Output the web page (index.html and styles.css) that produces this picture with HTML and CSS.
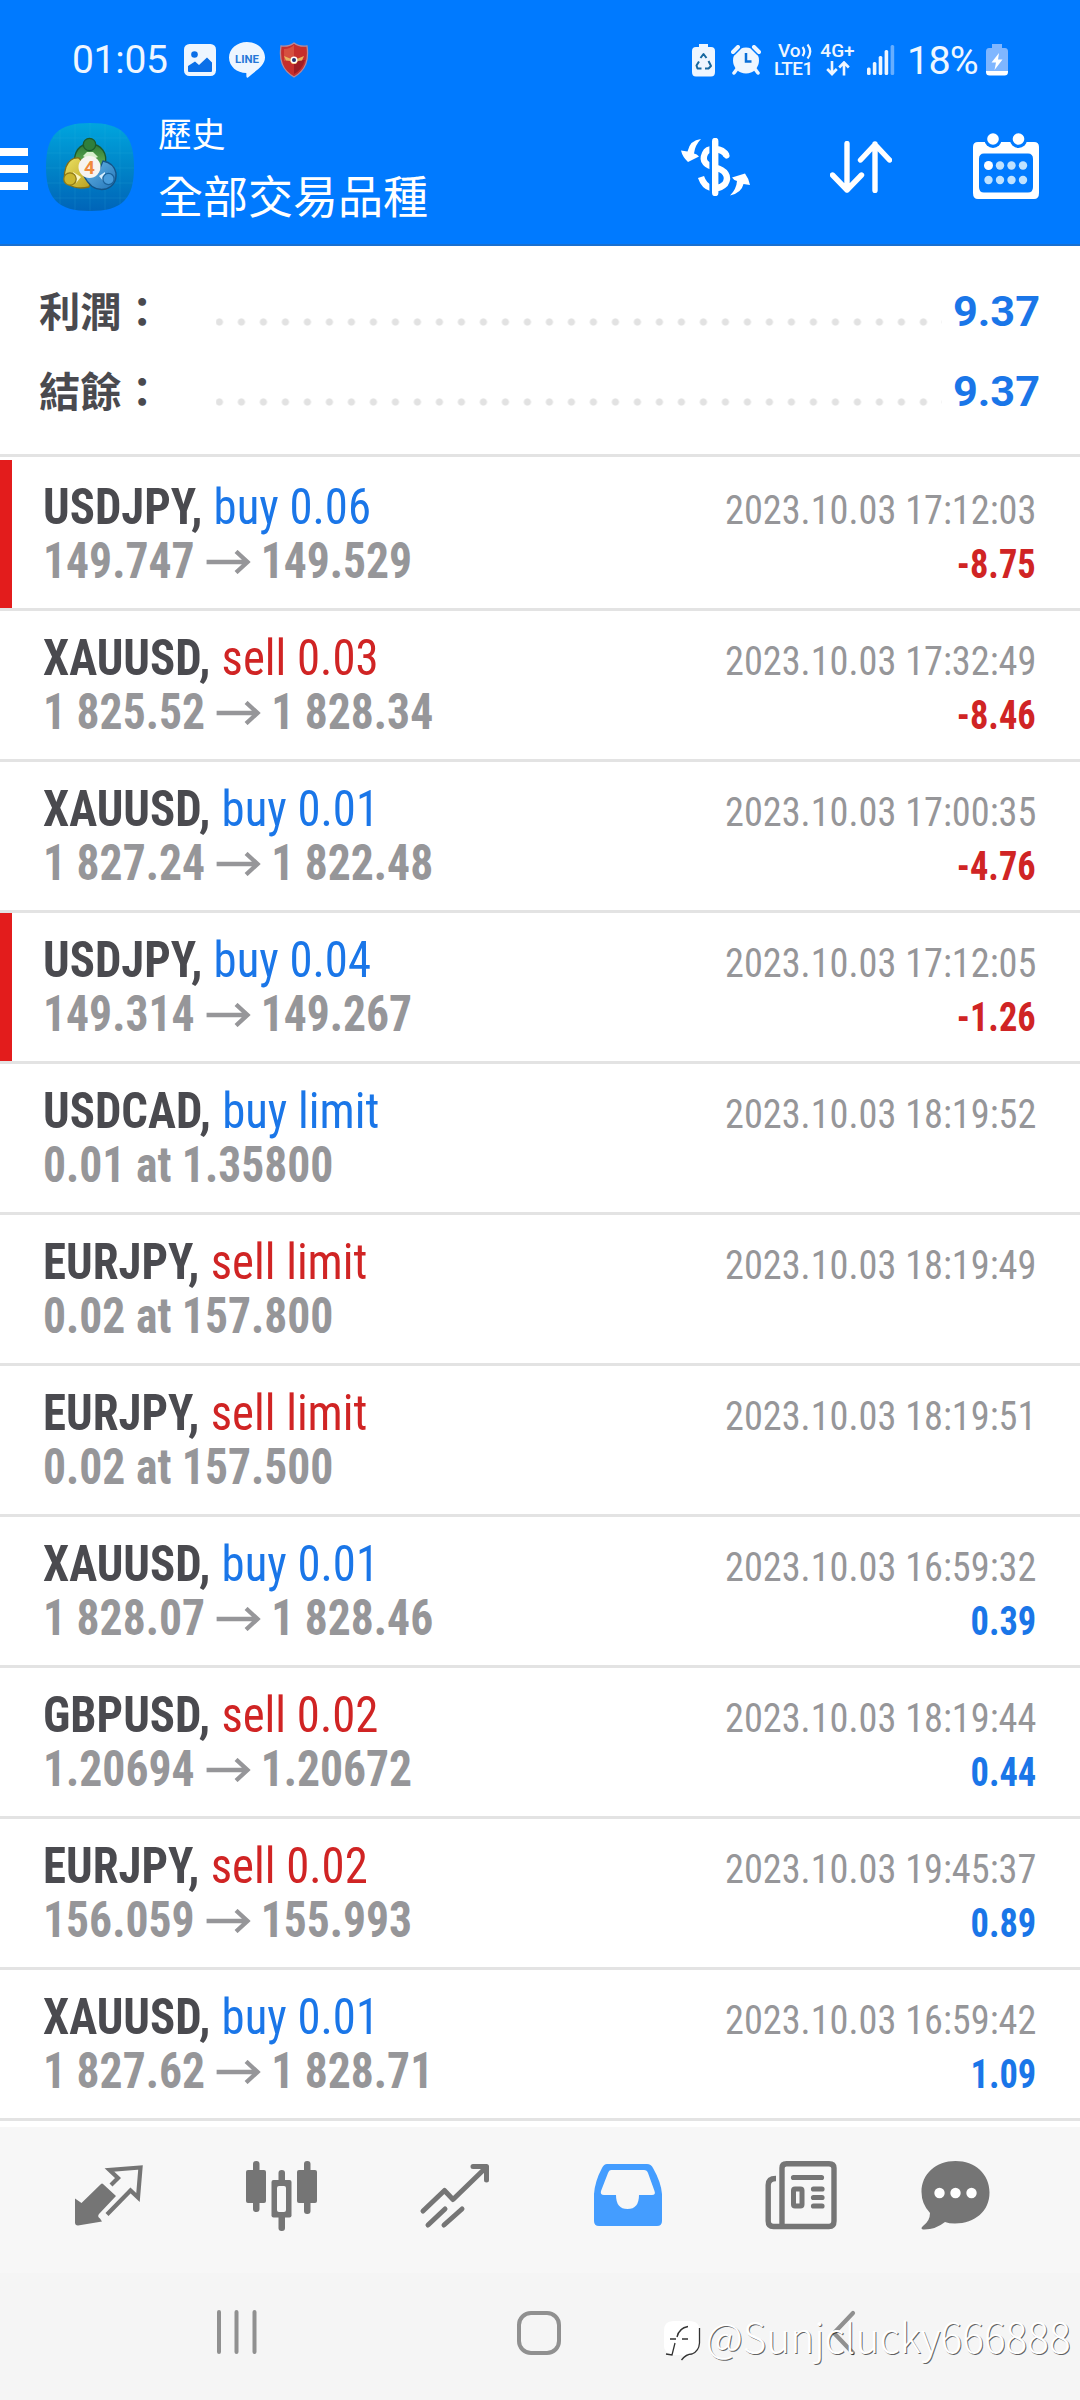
FILE: index.html
```html
<!DOCTYPE html>
<html lang="zh-Hant">
<head>
<meta charset="utf-8">
<title>歷史</title>
<link rel="stylesheet" href="styles.css">
</head>
<body>
<svg class="defs" width="0" height="0" aria-hidden="true">
  <symbol id="arrow" viewBox="0 0 45 24" preserveAspectRatio="none"><path d="M0 12H42M30 1.5L41.5 12L30 22.5" fill="none" stroke="currentColor" stroke-width="4.4"/></symbol>
</svg>
<header class="header">
  <div class="status">
    <span class="clock">01:05</span>
    <svg class="s-photo" width="32" height="32" viewBox="0 0 32 32"><rect width="32" height="32" rx="5.5" fill="#eef6ff"/><circle cx="10.5" cy="10.5" r="3.3" fill="#0a6fe8"/><path d="M4 22L11 17.5L15 21L23 13.500L28 18.500V27Q28 28 27 28H5Q4 28 4 27Z" fill="#0a6fe8"/></svg>
    <svg class="s-line" width="36" height="36" viewBox="0 0 36 36"><path d="M18 0C28 0 36 7 36 15.500C36 24 26 29 19 35.500C17 36.500 17.500 33 17.300 31C8 31 0 24.500 0 15.500C0 7 8 0 18 0Z" fill="#eef6ff"/><text x="6" y="20.500" textLength="24" lengthAdjust="spacingAndGlyphs" class="line-label">LINE</text></svg>
    <svg class="s-shield" width="30" height="36" viewBox="0 0 30 36"><path d="M2 4Q10 5 15 1Q20 5 28 4C30 18 27 28 15 35C3 28 0 18 2 4Z" fill="#c62f2d" stroke="#b58a9a" stroke-width="1.300"/><path d="M5 7Q11 7 15 3V16L5 19Z" fill="#d6503f"/><path d="M15 18H26Q23 28 15 32Z" fill="#9f1d25"/><path d="M5 14L11 16.500H19L25 14L23 18.500L19 19L17 22H13L11 19L7 18.500Z" fill="#e9b45f"/><circle cx="15" cy="18" r="3.400" fill="#fff"/><circle cx="15" cy="18" r="2" fill="#27306e"/></svg>
    <svg class="s-saver" width="23" height="33" viewBox="0 0 23 33"><path d="M7 0H16V3H19Q23 3 23 7V28Q23 32.500 19 32.500H4Q0 32.500 0 28V7Q0 3 4 3H7Z" fill="#eef6ff"/><path d="M8.500 14L11.500 10L14.500 14M16.500 17L19 22L16.500 24.500H13M9.500 24.500H5.500L4.500 21.500L7 17.500" fill="none" stroke="#17689f" stroke-width="2" stroke-linejoin="round"/></svg>
    <svg class="s-alarm" width="30" height="30" viewBox="0 0 30 30"><circle cx="15" cy="15.500" r="13" fill="#eef6ff"/><path d="M2 7L7 2M28 7L23 2" stroke="#007aff" stroke-width="7" stroke-linecap="round"/><path d="M2 7L7 2M28 7L23 2" stroke="#eef6ff" stroke-width="4" stroke-linecap="round"/><path d="M6 24L3 28M24 24L27 28" stroke="#eef6ff" stroke-width="3.500" stroke-linecap="round"/><path d="M15 8V16.500H20.500" fill="none" stroke="#0a6fd8" stroke-width="2.500"/></svg>
    <span class="net volte"><span>Vo<svg width="12" height="17" viewBox="0 0 12 17"><path d="M1.500 4Q5 8.500 1.500 13M6.500 1.500Q12 8.500 6.500 15.500" fill="none" stroke="#eef6ff" stroke-width="2.200"/></svg></span><span>LTE1</span></span>
    <span class="net gen"><span>4G+</span><svg width="24" height="15" viewBox="0 0 24 15"><path d="M6 0V12.500M1.200 8L6 13L10.800 8M18 14.500V2M13.200 6.500L18 1.500L22.800 6.500" fill="none" stroke="#eef6ff" stroke-width="2.600"/></svg></span>
    <svg class="s-signal" width="28" height="30" viewBox="0 0 28 30"><g fill="#eef6ff"><rect y="22.500" width="3.600" height="7.500" rx="1.500"/><rect x="5.800" y="17" width="3.600" height="13" rx="1.500"/><rect x="11.700" y="11" width="3.600" height="19" rx="1.500"/><rect x="17.600" y="5" width="3.600" height="25" rx="1.500"/></g><rect x="23.600" width="3.600" height="30" rx="1.500" fill="#66aeff"/></svg>
    <span class="percent">18%</span>
    <svg class="s-batt" width="22" height="32" viewBox="0 0 22 32"><path d="M6 0H16V4H19Q22 4 22 7.500V27H0V7.500Q0 4 3 4H6Z" fill="#7fb6ff"/><path d="M0 27H22V28Q22 31.500 18.500 31.500H3.500Q0 31.500 0 28Z" fill="#fff"/><path d="M13 9L5.500 18.500H10L8.500 26L16.500 15.500H12Z" fill="#fff"/></svg>
  </div>
  <div class="appbar">
    <svg class="menu" width="28" height="42" viewBox="0 0 28 42"><path d="M0 0H28V8H0ZM0 17H28V25H0ZM0 34H28V42H0Z" fill="#fff"/></svg>
    <svg class="logo" width="88" height="88" viewBox="0 0 88 88">
      <defs>
        <linearGradient id="bg" x1="0" y1="0" x2="0" y2="1"><stop offset="0" stop-color="#00a5de"/><stop offset=".5" stop-color="#0085c8"/><stop offset="1" stop-color="#0064b8"/></linearGradient>
        <linearGradient id="gr" x1="0" y1="0" x2="0" y2="1"><stop offset="0" stop-color="#2c7a35"/><stop offset="1" stop-color="#71b85a"/></linearGradient>
        <linearGradient id="ye" x1="0" y1="0" x2="1" y2="1"><stop offset="0" stop-color="#ece264"/><stop offset="1" stop-color="#b89d1c"/></linearGradient>
        <linearGradient id="bl" x1="0" y1="0" x2="1" y2="1"><stop offset="0" stop-color="#69b8e8"/><stop offset="1" stop-color="#2274b8"/></linearGradient>
      </defs>
      <path d="M44 0C76 0 88 12 88 44C88 76 76 88 44 88C12 88 0 76 0 44C0 12 12 0 44 0Z" fill="url(#bg)"/>
      <path d="M14 7V81M29 1V87M44 0V88M59 1V87M74 7V81M7 15H81M1 30H87M0 45H88M1 60H87M7 75H81" stroke="#3ab9e5" stroke-opacity=".15"/>
      <g stroke-width="1.300">
        <path d="M28 42C28 28 34 21 44 21C55 21 62 30 59 42L52 47H36Z" fill="url(#gr)" stroke="#1c5a2c"/>
        <path d="M33 35Q24 34 20 44Q16 56 22 61Q30 67 43 64L47 52Z" fill="url(#ye)" stroke="#826f16"/>
        <path d="M57 38Q68 40 70 50Q71 62 60 66Q46 69 38 53L52 50Z" fill="url(#bl)" stroke="#145487"/>
        <path d="M37 33L41 29H47L52 34L44 37Z" fill="#d7efcc"/>
        <path d="M27 49L35 54L30 60Z" fill="#fbf6c2"/>
        <path d="M53 53L59 49L59 60Z" fill="#d5eeff"/>
        <circle cx="43.500" cy="21.500" r="6.200" fill="#2f7f3c" stroke="#1c5a2c"/>
        <circle cx="24" cy="56" r="6.200" fill="#cdb72f" stroke="#8f7a18"/>
        <circle cx="62.500" cy="56" r="5.600" fill="#4a9ddb" stroke="#1b639c"/>
      </g>
      <circle cx="43.500" cy="44" r="11" fill="#f7f4f0"/>
      <text x="38" y="51" class="logo-num">4</text>
    </svg>
    <div class="titles"><div class="title-sm">歷史</div><div class="title-lg">全部交易品種</div></div>
    <svg class="t-dollar" width="69" height="58" viewBox="0 0 69 58"><g fill="none" stroke="#fff"><path d="M45.500 17.500C41 9.500 27 9 24 15.500C20 24 26 27.500 34 29.500C44 32 49 38 44 46Q40 50 35 50" stroke-width="6.400"/><path d="M20 39Q23 48 30 50" stroke-width="6.400"/><path d="M29.700 6V54" stroke="#007aff" stroke-width="2.600"/><path d="M34.200 3V55" stroke-width="6.400" stroke-linecap="round"/><path d="M45.500 17.500L45 16.500" stroke-width="6" stroke-linecap="round"/></g><path d="M20 1Q9 2 6.500 13.500L0 12.500Q1.500 19 7 24L18 18.500Q16 16 13 15.500Q14 7 20 1Z" fill="#fff"/><path d="M49 57.500Q60.500 55 62.500 46L69 47Q67.500 40 64 35.500L51 39.500Q53 42.500 56 43Q55.500 51 49 57.500Z" fill="#fff"/></svg>
    <svg class="t-sort" width="62" height="52" viewBox="0 0 62 52"><path d="M17 2.500V49M2.500 34L17 49L31.500 34M45 49.500V3M30.500 19L45 3.500L59.500 19" fill="none" stroke="#fff" stroke-width="5.400" stroke-linecap="round" stroke-linejoin="round"/></svg>
    <svg class="t-cal" width="66" height="66" viewBox="0 0 66 66"><path fill-rule="evenodd" d="M5 9H61Q66 9 66 14V60Q66 66 61 66H5Q0 66 0 60V14Q0 9 5 9ZM11 20.500Q6 20.500 6 26V54Q6 59.500 11 59.500H55Q60 59.500 60 54V26Q60 20.500 55 20.500Z" fill="#fff"/><circle cx="20" cy="6.500" r="8.500" fill="#007aff"/><circle cx="45.500" cy="6.500" r="8.500" fill="#007aff"/><circle cx="20" cy="6" r="5.800" fill="#fff"/><circle cx="45.500" cy="6" r="5.800" fill="#fff"/><g fill="#bfe2ff"><circle cx="15.500" cy="32.500" r="4.500" fill="#fff"/><circle cx="27" cy="32.500" r="4.200"/><circle cx="38.500" cy="32.500" r="4.200"/><circle cx="50" cy="32.500" r="4.200"/><circle cx="15.500" cy="47" r="4.200"/><circle cx="27" cy="47" r="4.200"/><circle cx="38.500" cy="47" r="4.200"/><circle cx="50" cy="47" r="4.200"/></g></svg>
  </div>
</header>
<main>
  <section class="summary">
    <div class="sum-row"><span class="label">利潤：</span><span class="dots"></span><span class="total">9.37</span></div>
    <div class="sum-row"><span class="label">結餘：</span><span class="dots"></span><span class="total">9.37</span></div>
  </section>
  <section class="deals">
    <article class="deal stopped">
      <div class="line"><div class="head"><span class="sym">USDJPY,</span><span class="op buy">buy 0.06</span></div><time>2023.10.03 17:12:03</time></div>
      <div class="line"><div class="prices"><span>149.747</span><svg class="arrow"><use href="#arrow"/></svg><span>149.529</span></div><b class="loss">-8.75</b></div>
    </article>
    <article class="deal">
      <div class="line"><div class="head"><span class="sym">XAUUSD,</span><span class="op sell">sell 0.03</span></div><time>2023.10.03 17:32:49</time></div>
      <div class="line"><div class="prices"><span>1 825.52</span><svg class="arrow"><use href="#arrow"/></svg><span>1 828.34</span></div><b class="loss">-8.46</b></div>
    </article>
    <article class="deal">
      <div class="line"><div class="head"><span class="sym">XAUUSD,</span><span class="op buy">buy 0.01</span></div><time>2023.10.03 17:00:35</time></div>
      <div class="line"><div class="prices"><span>1 827.24</span><svg class="arrow"><use href="#arrow"/></svg><span>1 822.48</span></div><b class="loss">-4.76</b></div>
    </article>
    <article class="deal stopped">
      <div class="line"><div class="head"><span class="sym">USDJPY,</span><span class="op buy">buy 0.04</span></div><time>2023.10.03 17:12:05</time></div>
      <div class="line"><div class="prices"><span>149.314</span><svg class="arrow"><use href="#arrow"/></svg><span>149.267</span></div><b class="loss">-1.26</b></div>
    </article>
    <article class="deal">
      <div class="line"><div class="head"><span class="sym">USDCAD,</span><span class="op buy">buy limit</span></div><time>2023.10.03 18:19:52</time></div>
      <div class="line"><div class="prices"><span>0.01 at 1.35800</span></div></div>
    </article>
    <article class="deal">
      <div class="line"><div class="head"><span class="sym">EURJPY,</span><span class="op sell">sell limit</span></div><time>2023.10.03 18:19:49</time></div>
      <div class="line"><div class="prices"><span>0.02 at 157.800</span></div></div>
    </article>
    <article class="deal">
      <div class="line"><div class="head"><span class="sym">EURJPY,</span><span class="op sell">sell limit</span></div><time>2023.10.03 18:19:51</time></div>
      <div class="line"><div class="prices"><span>0.02 at 157.500</span></div></div>
    </article>
    <article class="deal">
      <div class="line"><div class="head"><span class="sym">XAUUSD,</span><span class="op buy">buy 0.01</span></div><time>2023.10.03 16:59:32</time></div>
      <div class="line"><div class="prices"><span>1 828.07</span><svg class="arrow"><use href="#arrow"/></svg><span>1 828.46</span></div><b class="gain">0.39</b></div>
    </article>
    <article class="deal">
      <div class="line"><div class="head"><span class="sym">GBPUSD,</span><span class="op sell">sell 0.02</span></div><time>2023.10.03 18:19:44</time></div>
      <div class="line"><div class="prices"><span>1.20694</span><svg class="arrow"><use href="#arrow"/></svg><span>1.20672</span></div><b class="gain">0.44</b></div>
    </article>
    <article class="deal">
      <div class="line"><div class="head"><span class="sym">EURJPY,</span><span class="op sell">sell 0.02</span></div><time>2023.10.03 19:45:37</time></div>
      <div class="line"><div class="prices"><span>156.059</span><svg class="arrow"><use href="#arrow"/></svg><span>155.993</span></div><b class="gain">0.89</b></div>
    </article>
    <article class="deal">
      <div class="line"><div class="head"><span class="sym">XAUUSD,</span><span class="op buy">buy 0.01</span></div><time>2023.10.03 16:59:42</time></div>
      <div class="line"><div class="prices"><span>1 827.62</span><svg class="arrow"><use href="#arrow"/></svg><span>1 828.71</span></div><b class="gain">1.09</b></div>
    </article>
  </section>
</main>
<nav class="tabs">
  <svg width="72" height="72" viewBox="0 0 72 72"><path d="M31 19.500L44 31.500L27 49.500Q25 52 28 54L30 57L6 61Q3 61 3 58V34L9.500 38.500L28.500 20Q30 18.500 31 19.500Z" transform="translate(-1 3.500)" fill="#757575"/><path d="M38 24L45 17L36.500 9L67.500 6.500L65 36.500L57.500 29.500L34 53.500" fill="none" stroke="#757575" stroke-width="4.200" stroke-linejoin="miter"/></svg>
  <svg width="72" height="72" viewBox="0 0 72 72"><g fill="#757575"><rect x="7" y="0" width="6.500" height="51" rx="3"/><rect x="58" y="0" width="6.500" height="53" rx="3"/><rect x="32.500" y="9" width="6.500" height="61" rx="3"/><rect x="0" y="9" width="20" height="33" rx="2"/><rect x="51" y="9" width="20" height="33" rx="2"/><rect x="25.500" y="19" width="20" height="37.500" rx="2"/></g><rect x="31" y="25" width="9" height="26" rx="2" fill="#f7f7f7"/></svg>
  <svg width="72" height="72" viewBox="0 0 72 72"><path d="M4 50L25.500 29.500L34 38.500L67 6.500M54 5.500H67.500V19M9 64L26 48M25 64L43 48" fill="none" stroke="#757575" stroke-width="5" stroke-linecap="round" stroke-linejoin="round"/></svg>
  <svg width="72" height="72" viewBox="0 0 72 72"><path fill-rule="evenodd" d="M15 3H55Q59 3 61 7Q69 21 70 33V60Q70 65 65 65H7Q2 65 2 60V33Q3 20 10 7Q12 3 15 3ZM19 9Q17 9 16 12L9 30Q8 34 12 34H24Q24 48 35.500 48Q47 48 47 34H60Q64 34 62.500 30L56 12Q55 9 52 9Z" fill="#449dff"/></svg>
  <svg width="72" height="72" viewBox="0 0 72 72"><g fill="none" stroke="#757575"><path d="M17 64V7Q17 2.700 21.500 2.700H64Q69 2.700 69 7V60Q69 65.500 64 65.500H8.500Q3.200 65.500 3.200 60V24Q3.200 17.500 11 17.500" stroke-width="5.400"/><path d="M28.500 16.500H56.500M48.500 28H57M48.500 36.500H57M48.500 45H57" stroke-width="5.200" stroke-linecap="round"/><rect x="28.500" y="28" width="8.500" height="17" rx="1.500" stroke-width="5"/></g></svg>
  <svg class="tab-chat" width="72" height="72" viewBox="0 0 72 72"><path d="M36.500 0C56 0 70.500 13 70.500 31.500C70.500 50 56 62.500 36 62.500Q30 62.500 26 61Q16 69 4 68.500Q1 67.500 4 65Q11 60 11 52Q2.500 43 2.500 31C2.500 13 17 0 36.500 0Z" fill="#757575"/><g fill="#fff"><circle cx="20.500" cy="32" r="5.200"/><circle cx="36.500" cy="32" r="5.200"/><circle cx="52.500" cy="32" r="5.200"/></g></svg>
</nav>
<footer class="sysnav">
  <svg class="recents" width="42" height="44" viewBox="0 0 42 44"><path d="M3 2V42M20.500 2V42M38.500 2V42" stroke="#909090" stroke-width="4" stroke-linecap="round"/></svg>
  <svg class="home" width="46" height="46" viewBox="0 0 46 46"><rect x="3" y="3" width="40" height="40" rx="12" fill="none" stroke="#909090" stroke-width="4"/></svg>
  <svg class="back" width="26" height="46" viewBox="0 0 26 46"><path d="M22 3L3 23L22 43" fill="none" stroke="#909090" stroke-width="4.200" stroke-linecap="round"/></svg>
  <div class="watermark">
    <svg width="42" height="44" viewBox="0 0 42 44"><path d="M12 3H28Q39 3 39 14V25Q39 33 31 36Q25 36 21 42Q24 36 18 37H12Q3 35 3 28V13Q3 3 12 3Z" fill="#fff"/><path d="M38.500 10V25Q38 33 31 36Q25 36 20.500 42M16 19Q18 10 27 8.500M9 21H15M21 21H27M14 25L11 37L5 36" fill="none" stroke="#333" stroke-width="1.300"/></svg>
    <span>@Sunjclucky666888</span>
  </div>
</footer>
</body>
</html>
```
FILE: styles.css
```css
* { box-sizing: border-box; }
body { margin: 0; width: 1080px; height: 2400px; background: #fff; font-family: "Roboto Condensed", Roboto, "Noto Sans CJK TC", sans-serif; overflow: hidden; display: flex; flex-direction: column; }
svg { display: block; flex: none; }
.defs { position: absolute; }

.header { height: 246px; background: #007aff; border-bottom: 2px solid #1a70d0; color: #fff; flex: none; }
.status { height: 110px; padding: 10px 0 0 72px; display: flex; align-items: center; font-family: Roboto, sans-serif; color: #eef6ff; }
.clock { font-size: 39px; width: 112px; letter-spacing: -0.3px; }
.s-line { margin-left: 13px; }
.line-label { font: 700 11px Roboto, sans-serif; fill: #2577d8; }
.s-shield { margin-left: 14px; }
.s-saver { margin-left: 383px; }
.s-alarm { margin-left: 16px; }
.net { display: flex; flex-direction: column; font-weight: 500; font-size: 19px; line-height: 18px; }
.net span { display: flex; align-items: center; height: 18px; }
.volte { margin-left: 13px; width: 46px; }
.volte span:first-child { padding-left: 4px; }
.volte span:last-child { letter-spacing: -0.6px; }
.gen { width: 35px; align-items: center; }
.gen svg { margin: 1px 0 2px; }
.s-signal { margin-left: 12px; }
.percent { font-size: 39.5px; margin-left: 12px; width: 79px; letter-spacing: -0.8px; }

.appbar { display: flex; align-items: flex-start; height: 134px; }
.menu { margin-top: 38px; }
.logo { margin: 13px 0 0 18px; }
.logo-num { font: 700 19px Roboto, sans-serif; fill: #f08a3c; }
.titles { margin-left: 24px; width: 523px; font-family: "Noto Sans CJK TC", sans-serif; font-weight: 400; }
.title-sm { font-size: 33.7px; line-height: 46px; }
.title-lg { font-size: 45px; line-height: 60px; margin-top: 9px; }
.t-dollar { margin-top: 28px; }
.t-sort { margin: 31px 0 0 80px; }
.t-cal { margin: 23px 0 0 81px; }

.summary { height: 211px; border-bottom: 3px solid #e3e3e3; padding: 26px 40px 0 39px; }
.sum-row { height: 80px; display: flex; align-items: center; }
.label { width: 177px; margin-top: -6px; font: 700 41.3px/80px "Noto Sans CJK TC", sans-serif; color: #4a4a4f; }
.dots { width: 726px; height: 22px; margin-top: 20px; background: radial-gradient(circle, #e2e2e2 3.2px, transparent 4px) -7.600px 0 / 22px 22px repeat-x; }
.total { margin-left: auto; font: 700 43.3px/80px Roboto, sans-serif; color: #1a76e8; }

.deals { padding-top: 3px; height: 1670px; }
.deal { height: 151px; border-bottom: 3px solid #e3e3e3; padding: 20px 44px 0 43px; background: linear-gradient(#e31c1c, #e31c1c) no-repeat -12px 0 / 12px 100%; }
.deal.stopped { background-position: 0 0; }
.line { display: flex; align-items: baseline; justify-content: space-between; height: 54px; line-height: 54px; font-size: 50px; white-space: pre; }
.head { display: flex; transform: scaleX(0.935); transform-origin: 0 0; }
.sym { font-weight: 700; color: #4a4a4f; }
.op { margin-left: 12px; }
.buy, .gain { color: #1a76e8; }
.sell, .loss { color: #d02424; }
.prices { display: flex; font-weight: 700; color: #969699; transform: scaleX(0.912); transform-origin: 0 0; }
.arrow { width: 49px; height: 24px; margin: 16px 11px 0 12.5px; }
.line time, .line b { font-size: 40px; transform-origin: 100% 0; }
.line time { color: #969699; transform: scaleX(0.957); }
.line b { transform: scaleX(0.91); }

.tabs { height: 146px; background: #f7f7f7; display: flex; padding: 34px 89px 0 73px; gap: 101px; flex: none; }
.tab-chat { margin-left: -19px; }
.sysnav { position: relative; height: 127px; background: #f5f5f5; display: flex; padding: 37px 0 0 216px; flex: none; }
.home { margin-left: 258px; }
.back { margin-left: 269px; }
.watermark { position: absolute; left: 661px; top: 45px; display: flex; color: #fff; }
.watermark span { margin: -4px 0 0 3px; font: 300 40.5px/44px "Noto Sans CJK TC", sans-serif; text-shadow: 1px 1px 0 rgba(0, 0, 0, 0.6); }
```
